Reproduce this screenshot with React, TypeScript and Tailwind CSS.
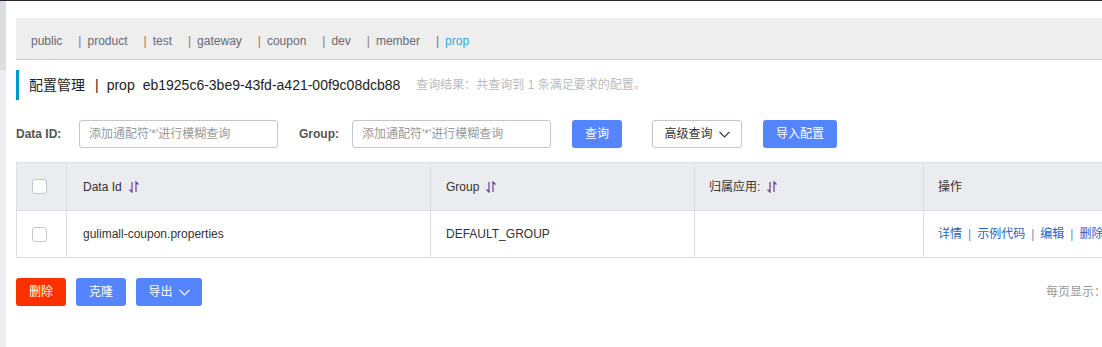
import React from "react";

const font = { fontFamily: '"Liberation Sans", "Noto Sans CJK SC", sans-serif' };

function SortIcon() {
  return (
    <svg width="10" height="12" viewBox="0 0 10 12" className="inline-block ml-[7px]" fill="none" stroke="#6a3a98" strokeWidth="1.2">
      <path d="M3 1 V11 L0.5 8.5" />
      <path d="M7 11 V1 L9.5 3.5" />
    </svg>
  );
}

function Chevron({ color }: { color: string }) {
  return (
    <svg width="11" height="7" viewBox="0 0 11 7" fill="none" stroke={color} strokeWidth="1.2" className="inline-block ml-[6px]">
      <path d="M0.5 0.8 L5.5 6 L10.5 0.8" />
    </svg>
  );
}

function Checkbox() {
  return <div className="w-[15px] h-[15px] rounded-[3px] border border-[#c4c6cf] bg-white" />;
}

const navItems = ["product", "test", "gateway", "coupon", "dev", "member"];

export default function App() {
  return (
    <div className="w-[1102px] h-[347px] overflow-hidden bg-white text-[12px] text-[#333]" style={font}>
      <div className="h-px bg-[#23272b]" />
      <div className="flex">
        <div className="w-[6px] shrink-0 flex flex-col h-[346px]">
          <div className="h-[69px] bg-[#dcdee4]" />
          <div className="flex-1 bg-[#eceef2]" />
        </div>
        <div className="ml-[10px] w-[1200px] shrink-0">
          {/* nav */}
          <div className="mt-[17px] h-[42px] pt-[4px] bg-[#eeeeee] border-b border-[#cccccc] flex items-center pl-[15px] text-[#666a75]">
            <span>public</span>
            {navItems.map((n) => (
              <span key={n} className="ml-[16px] flex items-center">
                <span className="text-[#8a7a66]">|</span>
                <span className="ml-[6px]">{n}</span>
              </span>
            ))}
            <span className="ml-[16px] flex items-center">
              <span className="text-[#6a6fa0]">|</span>
              <span className="ml-[6px] text-[#33aadd]">prop</span>
            </span>
          </div>
          {/* title */}
          <div className="mt-[10px] h-[30px] flex items-center">
            <div className="w-[3px] h-[30px] bg-[#0099cc]" />
            <div className="ml-[10px] text-[14px] text-[#222] flex items-center whitespace-nowrap">
              <span>配置管理</span>
              <span className="ml-[10px]">|</span>
              <span className="ml-[8px]">prop</span>
              <span className="ml-[8px]">eb1925c6-3be9-43fd-a421-00f9c08dcb88</span>
            </div>
            <div className="ml-[16px] text-[12px] text-[#bbbbbb] whitespace-nowrap">查询结果：共查询到 1 条满足要求的配置。</div>
          </div>
          {/* search */}
          <div className="mt-[20px] h-[28px] flex items-center">
            <span className="font-bold text-[#555] w-[63px]">Data ID:</span>
            <div className="w-[199px] h-[28px] border border-[#c4c6cf] rounded-[3px] flex items-center pl-[9px] text-[#999]">
              添加通配符'*'进行模糊查询
            </div>
            <span className="font-bold text-[#555] ml-[21px] w-[53px]">Group:</span>
            <div className="w-[199px] h-[28px] border border-[#c4c6cf] rounded-[3px] flex items-center pl-[9px] text-[#999]">
              添加通配符'*'进行模糊查询
            </div>
            <div className="ml-[21px] w-[50px] h-[28px] rounded-[3px] bg-[#5584ff] text-white flex items-center justify-center">查询</div>
            <div className="ml-[30px] w-[90px] h-[28px] rounded-[3px] border border-[#c4c6cf] bg-white text-[#333] flex items-center justify-center">
              高级查询<Chevron color="#333" />
            </div>
            <div className="ml-[21px] w-[74px] h-[28px] rounded-[3px] bg-[#5584ff] text-white flex items-center justify-center">导入配置</div>
          </div>
          {/* table */}
          <div className="mt-[14px] border-t border-l border-[#dcdee3] w-[1200px]">
            <div className="grid grid-cols-[50px_364px_264px_229px_293px] h-[48px] bg-[#ebecf0] border-b border-[#dcdee3]">
              <div className="border-r border-[#dcdee3] flex items-center pl-[15px]"><Checkbox /></div>
              <div className="border-r border-[#dcdee3] flex items-center pl-[16px]">Data Id<SortIcon /></div>
              <div className="border-r border-[#dcdee3] flex items-center pl-[15px]">Group<SortIcon /></div>
              <div className="border-r border-[#dcdee3] flex items-center pl-[14px]">归属应用:<SortIcon /></div>
              <div className="border-r border-[#dcdee3] flex items-center pl-[14px]">操作</div>
            </div>
            <div className="grid grid-cols-[50px_364px_264px_229px_293px] h-[47px] bg-white border-b border-[#dcdee3]">
              <div className="border-r border-[#dcdee3] flex items-center pl-[15px]"><Checkbox /></div>
              <div className="border-r border-[#dcdee3] flex items-center pl-[16px]">gulimall-coupon.properties</div>
              <div className="border-r border-[#dcdee3] flex items-center pl-[15px]">DEFAULT_GROUP</div>
              <div className="border-r border-[#dcdee3]" />
              <div className="border-r border-[#dcdee3] flex items-center pl-[14px] text-[#1f63c6] whitespace-nowrap">
                <span>详情</span>
                <span className="mx-[6px] text-[#6b8ccc]">|</span>
                <span>示例代码</span>
                <span className="mx-[6px] text-[#6b8ccc]">|</span>
                <span>编辑</span>
                <span className="mx-[6px] text-[#6b8ccc]">|</span>
                <span>删除</span>
              </div>
            </div>
          </div>
          {/* bottom */}
          <div className="mt-[20px] h-[28px] flex items-center">
            <div className="w-[50px] h-[28px] rounded-[3px] bg-[#ff3000] text-white flex items-center justify-center">删除</div>
            <div className="ml-[10px] w-[50px] h-[28px] rounded-[3px] bg-[#5584ff] text-white flex items-center justify-center">克隆</div>
            <div className="ml-[10px] w-[66px] h-[28px] rounded-[3px] bg-[#5584ff] text-white flex items-center justify-center">
              导出<Chevron color="#fff" />
            </div>
            <div className="ml-[844px] text-[#999] whitespace-nowrap">每页显示：</div>
          </div>
        </div>
      </div>
    </div>
  );
}
